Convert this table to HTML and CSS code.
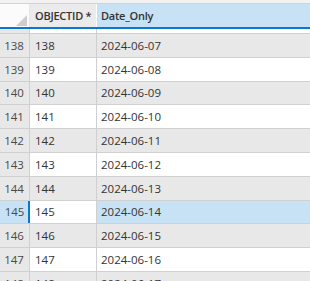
FILE: index.html
```html
<!DOCTYPE html>
<html>
<head>
<meta charset="utf-8">
<link rel="stylesheet" href="styles.css">
</head>
<body>
<div class="grid">
  <div class="topstrip"></div>
  <div class="row head">
    <div class="rh corner"><span class="tri"></span></div>
    <div class="c1 hc">OBJECTID *</div>
    <div class="c2 hc sel-col">Date_Only</div>
  </div>
  <div class="body">
    <div class="row sliver"><div class="rh"></div><div class="c1"></div><div class="c2"></div></div>
    <div class="row odd"><div class="rh">138</div><div class="c1">138</div><div class="c2">2024-06-07</div></div>
    <div class="row"><div class="rh">139</div><div class="c1">139</div><div class="c2">2024-06-08</div></div>
    <div class="row odd"><div class="rh">140</div><div class="c1">140</div><div class="c2">2024-06-09</div></div>
    <div class="row"><div class="rh">141</div><div class="c1">141</div><div class="c2">2024-06-10</div></div>
    <div class="row odd"><div class="rh">142</div><div class="c1">142</div><div class="c2">2024-06-11</div></div>
    <div class="row"><div class="rh">143</div><div class="c1">143</div><div class="c2">2024-06-12</div></div>
    <div class="row odd"><div class="rh">144</div><div class="c1">144</div><div class="c2">2024-06-13</div></div>
    <div class="row selected"><div class="rh">145</div><div class="c1 active">145</div><div class="c2">2024-06-14</div></div>
    <div class="row odd"><div class="rh">146</div><div class="c1">146</div><div class="c2">2024-06-15</div></div>
    <div class="row"><div class="rh">147</div><div class="c1">147</div><div class="c2">2024-06-16</div></div>
    <div class="row odd"><div class="rh">148</div><div class="c1">148</div><div class="c2">2024-06-17</div></div>
  </div>
</div>
</body>
</html>
```

FILE: styles.css
```css
html, body {
  margin: 0;
  padding: 0;
  background: #ffffff;
}
.grid {
  width: 310px;
  height: 281px;
  overflow: hidden;
  font-family: "Open Sans", "Noto Sans", sans-serif;
  font-size: 11.5px;
  color: #333333;
}
.topstrip {
  height: 3px;
  background: #f2f2f2;
  border-bottom: 1px solid #d2d2d2;
}
.row {
  display: flex;
  height: 22.8px;
  border-bottom: 1px solid #d0d0d0;
}
.row > div {
  display: flex;
  align-items: center;
  white-space: nowrap;
  box-sizing: border-box;
}
.rh {
  width: 30px;
  justify-content: center;
  background: #e8e8e8;
  border-right: 1px solid #cfcfcf;
  color: #4a4a4a;
  padding-right: 1px;
}
.c1 {
  width: 67px;
  padding-left: 5px;
  border-right: 1px solid #cfcfcf;
}
.c2 {
  flex: 1;
  padding-left: 4px;
}
.row.odd .c1, .row.odd .c2 {
  background: #e8e8e8;
}
.head {
  height: 23px;
  border-bottom: 2px solid #0a78d0;
}
.head .rh {
  background: #fbfbfb;
  border-right: 1px solid #e6e6e6;
  position: relative;
}
.head .c1 {
  background: #ebebeb;
  border-right: 1px solid #ffffff;
}
.hc {
  font-weight: 600;
  font-size: 11px;
  letter-spacing: -0.25px;
  color: #333333;
}
.head .c2.sel-col {
  background: #c7e2f5;
}
.tri {
  position: absolute;
  right: 2px;
  bottom: 1px;
  width: 0;
  height: 0;
  border-left: 11px solid transparent;
  border-bottom: 11px solid #cdcdcd;
}
.row.sliver {
  height: 4px;
}
.row.selected .rh,
.row.selected .c2 {
  background: #c7e2f5;
}
.row.selected .c1.active {
  background: #ffffff;
  box-shadow: inset 2px 0 0 #0a78d0;
  margin-left: -2px;
  width: 69px;
  padding-left: 7px;
}
.row.selected .rh {
  border-right: none;
}
```
